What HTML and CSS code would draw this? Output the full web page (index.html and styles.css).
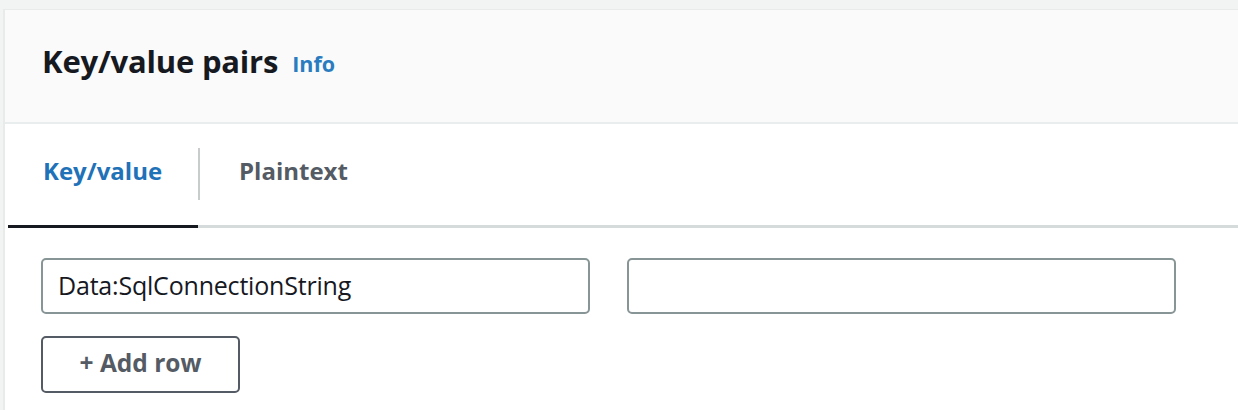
FILE: index.html
```html
<!DOCTYPE html>
<html>
<head>
<meta charset="utf-8">
<link rel="stylesheet" href="styles.css">
</head>
<body>
<div class="card">
  <div class="card-header">
    <h2 class="title">Key/value pairs</h2>
    <a class="info">Info</a>
  </div>
  <div class="tabs">
    <div class="tab active">Key/value</div>
    <div class="tab-sep"></div>
    <div class="tab">Plaintext</div>
  </div>
  <div class="content">
    <div class="row">
      <div class="input">Data:SqlConnectionString</div>
      <div class="input"></div>
    </div>
    <button class="btn">+ Add row</button>
  </div>
</div>
</body>
</html>
```

FILE: styles.css
```css
html, body {
  margin: 0;
  padding: 0;
  background: #f2f3f3;
  font-family: "Open Sans", "Noto Sans", sans-serif;
  overflow: hidden;
}
.card {
  margin: 9px 0 0 3px;
  background: #ffffff;
  border-left: 2px solid #e9ebeb;
  border-top: 1px solid #e9ebeb;
  min-height: 410px;
}
.card-header {
  background: #fafafa;
  height: 114px;
  box-sizing: border-box;
  padding: 0 0 10px 37px;
  border-bottom: 2px solid #eaeded;
  display: flex;
  align-items: center;
  gap: 14px;
}
.title {
  margin: 0;
  font-size: 31px;
  font-weight: 700;
  color: #16191f;
  letter-spacing: -0.2px;
}
.info {
  font-size: 21.5px;
  font-weight: 700;
  color: #2a7cc0;
  margin-top: 4px;
}
.tabs {
  display: flex;
  align-items: center;
  height: 101px;
  border-bottom: 3px solid #d5dbdb;
  margin-left: 3px;
}
.tab {
  font-size: 24px;
  font-weight: 700;
  color: #545b64;
  height: 101px;
  display: flex;
  align-items: center;
  padding: 0 39px 8px 39px;
  box-sizing: border-box;
}
.tab.active {
  color: #1f72b8;
  padding: 0 30px 8px 35px;
  width: 190px;
  border-bottom: 3px solid #16191f;
  margin-bottom: -3px;
  height: 104px;
}
.tab-sep {
  width: 2px;
  height: 52px;
  background: #c8cccc;
  margin-bottom: 2px;
}
.content {
  padding: 30px 0 0 36px;
}
.row {
  display: flex;
  gap: 37px;
}
.input {
  width: 549px;
  height: 56px;
  box-sizing: border-box;
  border: 2px solid #879596;
  border-radius: 5px;
  font-size: 25px;
  color: #16191f;
  display: flex;
  align-items: center;
  padding: 0 0 2px 15px;
  letter-spacing: -0.2px;
}
.btn {
  margin-top: 22px;
  width: 199px;
  height: 57px;
  background: #ffffff;
  border: 2px solid #545b64;
  border-radius: 5px;
  font-family: inherit;
  font-size: 24.5px;
  font-weight: 700;
  color: #545b64;
  padding: 0 0 4px 0;
}
```
